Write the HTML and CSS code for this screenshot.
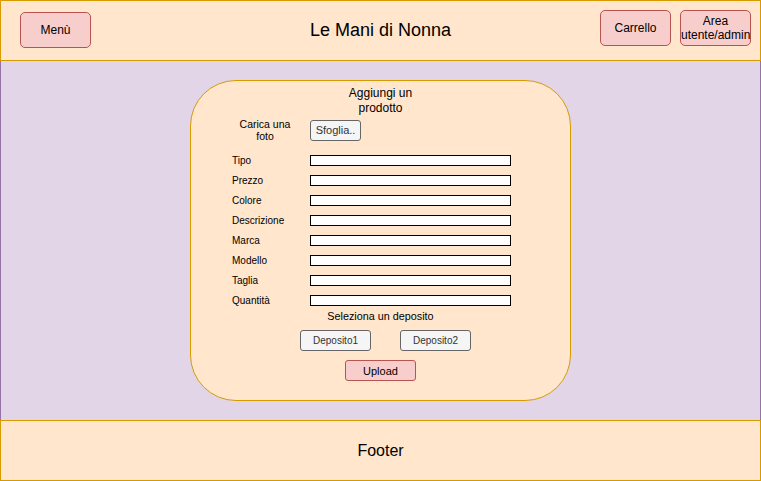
FILE: index.html
```html
<!DOCTYPE html>
<html lang="it">
<head>
<meta charset="utf-8">
<title>Le Mani di Nonna</title>
<link rel="stylesheet" href="styles.css">
</head>
<body>
<header class="topbar">
  <div class="left"><button class="btn btn-red menu">Menù</button></div>
  <h1 class="title">Le Mani di Nonna</h1>
  <div class="actions">
    <button class="btn btn-red">Carrello</button>
    <button class="btn btn-red area">Area utente/admin</button>
  </div>
</header>
<main class="content">
  <section class="card">
    <h2 class="card-title">Aggiungi un prodotto</h2>
    <div class="photo-row">
      <div class="photo-label"><span>Carica una</span><span>foto</span></div>
      <button class="btn btn-gray browse">Sfoglia..</button>
    </div>
    <div class="fields">
      <div class="field"><span class="label">Tipo</span><span class="input"></span></div>
      <div class="field"><span class="label">Prezzo</span><span class="input"></span></div>
      <div class="field"><span class="label">Colore</span><span class="input"></span></div>
      <div class="field"><span class="label">Descrizione</span><span class="input"></span></div>
      <div class="field"><span class="label">Marca</span><span class="input"></span></div>
      <div class="field"><span class="label">Modello</span><span class="input"></span></div>
      <div class="field"><span class="label">Taglia</span><span class="input"></span></div>
      <div class="field"><span class="label">Quantità</span><span class="input"></span></div>
    </div>
    <p class="select-text">Seleziona un deposito</p>
    <div class="depots">
      <button class="btn btn-gray depot">Deposito1</button>
      <button class="btn btn-gray depot">Deposito2</button>
    </div>
    <div class="upload-row"><button class="btn btn-red upload">Upload</button></div>
  </section>
</main>
<footer class="footer">Footer</footer>
</body>
</html>
```

FILE: styles.css
```css
* { box-sizing: border-box; }

body {
  margin: 0;
  width: 761px;
  font-family: "Liberation Sans", Arial, Helvetica, sans-serif;
  color: #000;
}

.btn {
  font-family: "Liberation Sans", Arial, Helvetica, sans-serif;
  color: #000;
  padding: 0;
  margin: 0;
  cursor: default;
  line-height: 14px;
  white-space: normal;
  overflow: visible;
}

.btn-red {
  background: #f8cecc;
  border: 1px solid #b85450;
  border-radius: 5px;
  font-size: 12px;
}

.btn-gray {
  background: #f5f5f5;
  border: 1px solid #666666;
  border-radius: 3px;
  color: #333;
}

/* Header */
.topbar {
  height: 61px;
  background: #ffe6cc;
  border: 1px solid #d79b00;
  display: grid;
  grid-template-columns: 1fr auto 1fr;
  align-items: start;
  padding: 0 9px;
}

.menu {
  width: 71px;
  height: 36px;
  margin: 11px 0 0 10px;
}

.title {
  margin: 18px 0 0;
  font-size: 18px;
  font-weight: normal;
  line-height: 22px;
}

.actions {
  justify-self: end;
  display: flex;
  gap: 9px;
  margin-top: 9px;
}

.actions .btn {
  width: 71px;
  height: 36px;
}

.area {
  line-height: 14.4px;
}

/* Main */
.content {
  height: 359px;
  background: #e1d5e7;
  border-left: 1px solid #9673a6;
  border-right: 1px solid #9673a6;
  padding-top: 19px;
}

.card {
  width: 381px;
  height: 321px;
  margin: 0 auto;
  background: #ffe6cc;
  border: 1px solid #d79b00;
  border-radius: 46px;
  padding-top: 5px;
  display: flex;
  flex-direction: column;
}

.card-title {
  margin: 0 auto;
  width: 80px;
  text-align: center;
  font-size: 12px;
  font-weight: normal;
  line-height: 15px;
}

.photo-row {
  display: flex;
  align-items: center;
  gap: 10px;
  padding-left: 39px;
  margin-top: 2px;
  height: 24px;
}

.photo-label {
  width: 70px;
  flex: none;
  display: flex;
  flex-direction: column;
  align-items: center;
  font-size: 10.5px;
  line-height: 12px;
}

.browse {
  width: 51px;
  height: 21px;
  font-size: 11px;
}

.fields {
  margin-top: 8px;
  display: flex;
  flex-direction: column;
}

.field {
  display: flex;
  align-items: flex-start;
  height: 20px;
  padding-left: 41px;
}

.label {
  width: 78px;
  font-size: 10px;
  line-height: 20px;
  padding-top: 1px;
}

.input {
  width: 201px;
  height: 11px;
  margin-top: 5px;
  background: #fff;
  border: 1px solid #000;
}

.select-text {
  margin: 0;
  text-align: center;
  font-size: 10.8px;
  line-height: 12px;
}

.depots {
  display: flex;
  gap: 29px;
  padding-left: 109px;
  margin-top: 8px;
}

.depot {
  width: 71px;
  height: 21px;
  font-size: 10px;
}

.upload-row {
  display: flex;
  justify-content: center;
  margin-top: 9px;
}

.upload {
  width: 71px;
  height: 21px;
  font-size: 11px;
  border-radius: 3px;
}

/* Footer */
.footer {
  height: 61px;
  background: #ffe6cc;
  border: 1px solid #d79b00;
  display: flex;
  align-items: center;
  justify-content: center;
  font-size: 16px;
}
```
